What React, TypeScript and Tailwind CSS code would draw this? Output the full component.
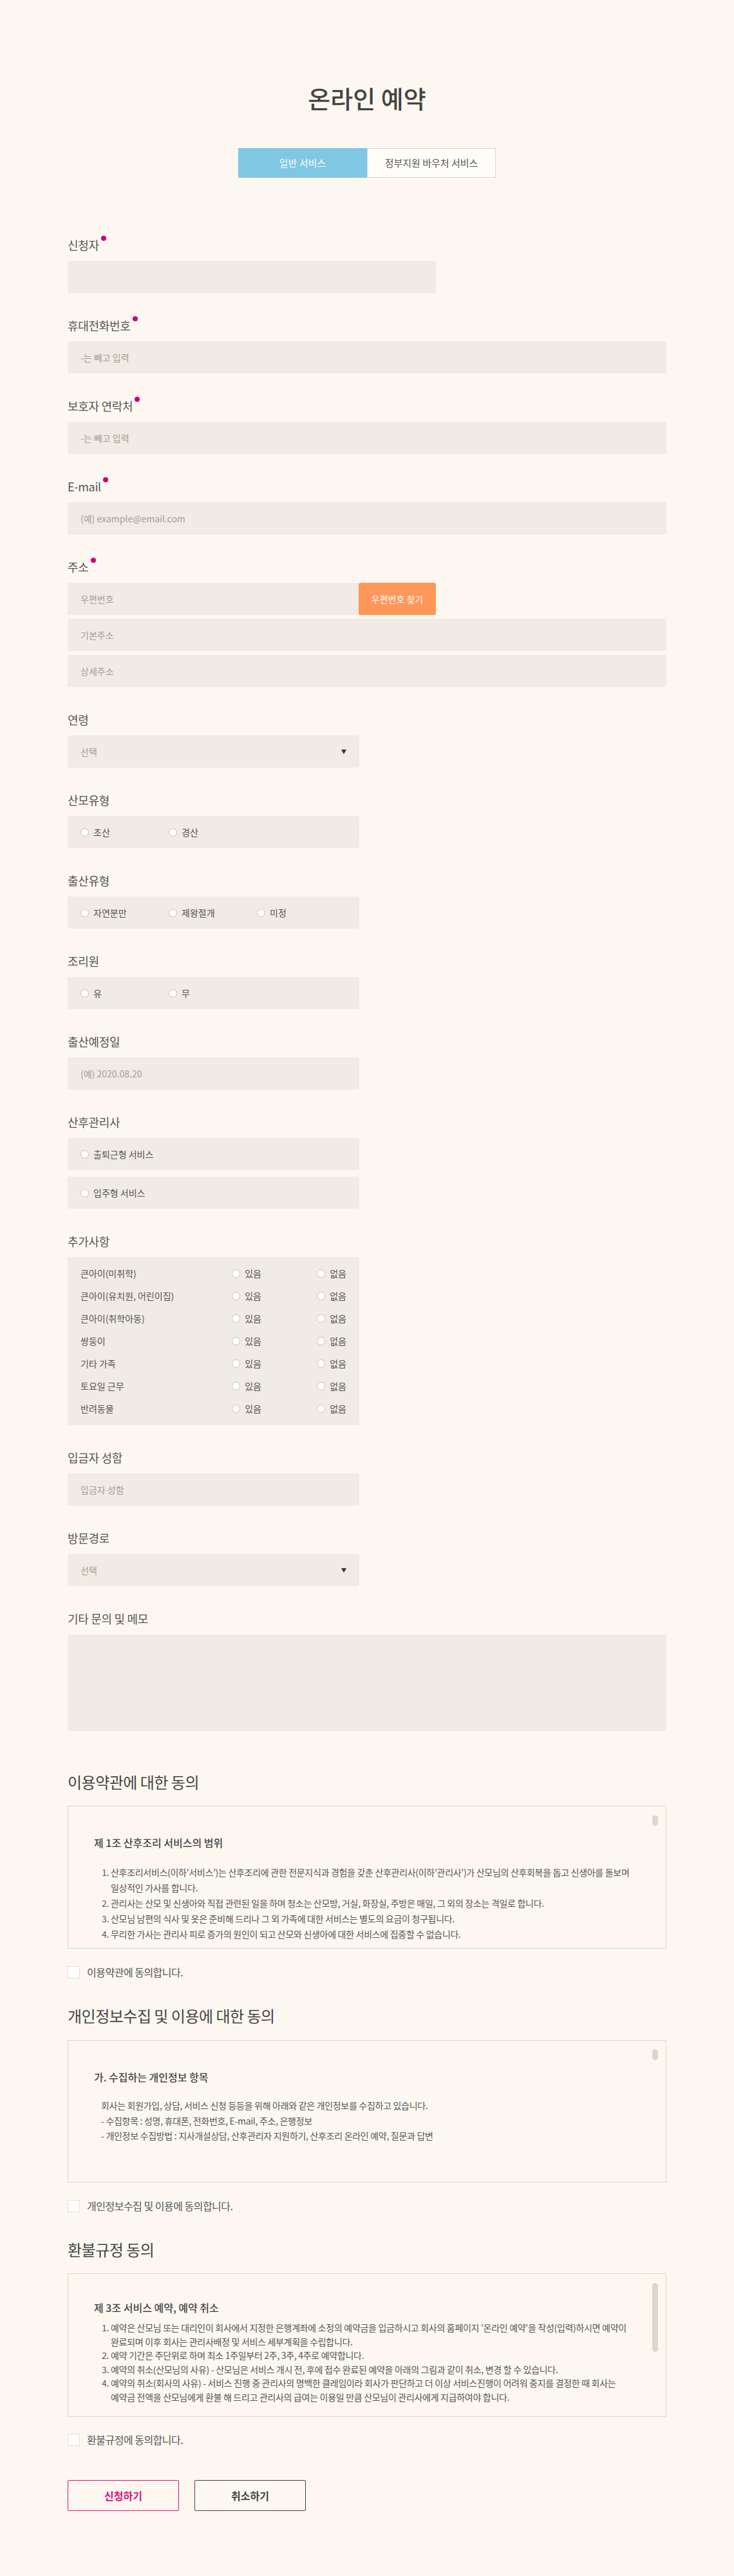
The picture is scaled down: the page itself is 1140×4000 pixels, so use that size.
import React from "react";

const FONT = "font-['Noto_Sans_CJK_KR','Noto_Sans',sans-serif]";

function Label({ children, required }: { children: React.ReactNode; required?: boolean }) {
  return (
    <div className="flex items-start h-[24px] text-[18px] leading-[24px] tracking-[-0.3px] text-[#555]">
      <span>{children}</span>
      {required && <span className="ml-[3px] mt-[-2px] w-[8px] h-[8px] rounded-full bg-[#d4006e]" />}
    </div>
  );
}

function TextInput({ placeholder, className = "" }: { placeholder?: string; className?: string }) {
  return (
    <input
      placeholder={placeholder}
      className={`h-[50px] rounded-[3px] bg-[#f0ebe4] px-[20px] text-[14px] text-[#555] placeholder:text-[#a49e97] outline-none ${className}`}
    />
  );
}

function SelectBox() {
  return (
    <div className="w-[453px] h-[50px] rounded-[3px] bg-[#f0ebe4] px-[20px] flex items-center justify-between text-[14px] text-[#a49e97]">
      <span>선택</span>
      <svg width="8" height="7" viewBox="0 0 8 7">
        <path d="M0 0 H8 L4 7 Z" fill="#333" />
      </svg>
    </div>
  );
}

function Radio({ label }: { label: string }) {
  return (
    <span className="flex items-center gap-[7px]">
      <span className="w-[13px] h-[13px] rounded-full border border-[#c4c0ba] bg-white shrink-0" />
      <span>{label}</span>
    </span>
  );
}

function RadioBox({ options }: { options: string[] }) {
  return (
    <div className="w-[453px] h-[50px] rounded-[3px] bg-[#f0ebe4] px-[20px] flex items-center text-[14px] text-[#555]">
      {options.map((o) => (
        <span key={o} className="w-[137px]">
          <Radio label={o} />
        </span>
      ))}
    </div>
  );
}

function Field({ label, required, children }: { label: string; required?: boolean; children: React.ReactNode }) {
  return (
    <div className="flex flex-col gap-[13px]">
      <Label required={required}>{label}</Label>
      {children}
    </div>
  );
}

function Check({ text }: { text: string }) {
  return (
    <div className="flex items-center gap-[11px] h-[20px]">
      <span className="w-[19px] h-[19px] bg-white border border-[#e4ded4]" />
      <span className="text-[16px] leading-[20px] tracking-[-0.5px] text-[#555]">{text}</span>
    </div>
  );
}

const extras = [
  "큰아이(미취학)",
  "큰아이(유치원, 어린이집)",
  "큰아이(취학아동)",
  "쌍둥이",
  "기타 가족",
  "토요일 근무",
  "반려동물",
];

export default function App() {
  return (
    <div className={`min-h-screen bg-[#fcf8f1] ${FONT}`}>
      <div className="w-[930px] mx-auto pt-[127px] pb-[102px]">
        <h1 className="text-center text-[38px] leading-[50px] font-medium text-[#444]">온라인 예약</h1>

        <div className="mt-[53px] flex justify-center">
          <div className="w-[200px] h-[46px] bg-[#80c7e3] flex items-center justify-center text-white text-[15px]">
            일반 서비스
          </div>
          <div className="w-[200px] h-[46px] bg-[#fffdf9] border border-[#ddd3c3] flex items-center justify-center text-[#555] text-[15px]">
            정부지원 바우처 서비스
          </div>
        </div>

        <div className="mt-[92px] flex flex-col gap-[38px]">
          <Field label="신청자" required>
            <TextInput className="w-[572px]" />
          </Field>
          <Field label="휴대전화번호" required>
            <TextInput className="w-full" placeholder="-는 빼고 입력" />
          </Field>
          <Field label="보호자 연락처" required>
            <TextInput className="w-full" placeholder="-는 빼고 입력" />
          </Field>
          <Field label="E-mail" required>
            <TextInput className="w-full" placeholder="(예) example@email.com" />
          </Field>
          <Field label="주소" required>
            <div className="flex flex-col gap-[6px]">
              <div className="flex">
                <input
                  placeholder="우편번호"
                  className="w-[452px] h-[50px] rounded-l-[3px] bg-[#f0ebe4] px-[20px] text-[14px] placeholder:text-[#a49e97] outline-none"
                />
                <div className="w-[120px] h-[50px] rounded-[3px] bg-[#ff9758] flex items-center justify-center text-white text-[14px]">
                  우편번호 찾기
                </div>
              </div>
              <TextInput className="w-full" placeholder="기본주소" />
              <TextInput className="w-full" placeholder="상세주소" />
            </div>
          </Field>
          <Field label="연령">
            <SelectBox />
          </Field>
          <Field label="산모유형">
            <RadioBox options={["초산", "경산"]} />
          </Field>
          <Field label="출산유형">
            <RadioBox options={["자연분만", "제왕절개", "미정"]} />
          </Field>
          <Field label="조리원">
            <RadioBox options={["유", "무"]} />
          </Field>
          <Field label="출산예정일">
            <TextInput className="w-[453px]" placeholder="(예) 2020.08.20" />
          </Field>
          <Field label="산후관리사">
            <div className="flex flex-col gap-[10px]">
              <RadioBox options={["출퇴근형 서비스"]} />
              <RadioBox options={["입주형 서비스"]} />
            </div>
          </Field>
          <Field label="추가사항">
            <div className="w-[453px] rounded-[3px] bg-[#f0ebe4] px-[20px] py-[8px] text-[14px] text-[#555]">
              {extras.map((e) => (
                <div key={e} className="h-[35px] flex items-center">
                  <span className="flex-1">{e}</span>
                  <span className="w-[132px]">
                    <Radio label="있음" />
                  </span>
                  <Radio label="없음" />
                </div>
              ))}
            </div>
          </Field>
          <Field label="입금자 성함">
            <TextInput className="w-[453px]" placeholder="입금자 성함" />
          </Field>
          <Field label="방문경로">
            <SelectBox />
          </Field>
          <Field label="기타 문의 및 메모">
            <textarea className="w-full h-[150px] rounded-[3px] bg-[#f0ebe4] p-[20px] resize-none outline-none text-[14px]" />
          </Field>
        </div>

        {/* 이용약관 */}
        <section className="mt-[63px]">
          <h2 className="text-[24px] leading-[32px] tracking-[-0.5px] text-[#444]">이용약관에 대한 동의</h2>
          <div className="mt-[21px] relative h-[222px] overflow-hidden border border-[#ddd5c7] pl-[40px] pr-[40px] pt-[44px]">
            <div className="absolute right-[12px] top-[14px] w-[9px] h-[16px] rounded-full bg-[#ddd6cc]" />
            <h3 className="text-[16px] leading-[24px] font-medium text-[#444] mb-[22px]">제 1조 산후조리 서비스의 범위</h3>
            <ol className="list-decimal break-keep pl-[26px] text-[14px] leading-[24px] tracking-[-0.3px] text-[#555]">
              <li>
                산후조리서비스(이하'서비스')는 산후조리에 관한 전문지식과 경험을 갖춘 산후관리사(이하'관리사')가 산모님의 산후회복을 돕고 신생아를 돌보며 일상적인 가사를 합니다.
              </li>
              <li>관리사는 산모 및 신생아와 직접 관련된 일을 하며 청소는 산모방, 거실, 화장실, 주방은 매일, 그 외의 장소는 격일로 합니다.</li>
              <li>산모님 남편의 식사 및 옷은 준비해 드리나 그 외 가족에 대한 서비스는 별도의 요금이 청구됩니다.</li>
              <li>무리한 가사는 관리사 피로 증가의 원인이 되고 산모와 신생아에 대한 서비스에 집중할 수 없습니다.</li>
            </ol>
          </div>
          <div className="mt-[26px]">
            <Check text="이용약관에 동의합니다." />
          </div>
        </section>

        {/* 개인정보 */}
        <section className="mt-[42px]">
          <h2 className="text-[24px] leading-[32px] tracking-[-0.5px] text-[#444]">개인정보수집 및 이용에 대한 동의</h2>
          <div className="mt-[22px] relative h-[221px] overflow-hidden border border-[#ddd5c7] pl-[40px] pr-[40px] pt-[44px]">
            <div className="absolute right-[12px] top-[13px] w-[9px] h-[17px] rounded-full bg-[#ddd6cc]" />
            <h3 className="text-[16px] leading-[24px] font-medium text-[#444] mb-[21px]">가. 수집하는 개인정보 항목</h3>
            <div className="pl-[11px] break-keep text-[14px] leading-[23.5px] tracking-[-0.3px] text-[#555]">
              <p>회사는 회원가입, 상담, 서비스 신청 등등을 위해 아래와 같은 개인정보를 수집하고 있습니다.</p>
              <p>- 수집항목 : 성명, 휴대폰, 전화번호, E-mail, 주소, 은행정보</p>
              <p>- 개인정보 수집방법 : 지사개설상담, 산후관리자 지원하기, 산후조리 온라인 예약, 질문과 답변</p>
            </div>
          </div>
          <div className="mt-[26px]">
            <Check text="개인정보수집 및 이용에 동의합니다." />
          </div>
        </section>

        {/* 환불규정 */}
        <section className="mt-[42px]">
          <h2 className="text-[24px] leading-[32px] tracking-[-0.5px] text-[#444]">환불규정 동의</h2>
          <div className="mt-[21px] relative h-[223px] overflow-hidden border border-[#ddd5c7] pl-[40px] pr-[40px] pt-[40px]">
            <div className="absolute right-[12px] top-[14px] w-[9px] h-[107px] rounded-full bg-[#ddd6cc]" />
            <h3 className="text-[16px] leading-[24px] font-medium text-[#444] mb-[9px]">제 3조 서비스 예약, 예약 취소</h3>
            <ol className="list-decimal break-keep pl-[26px] text-[14px] leading-[21.5px] tracking-[-0.3px] text-[#555]">
              <li>
                예약은 산모님 또는 대리인이 회사에서 지정한 은행계좌에 소정의 예약금을 입금하시고 회사의 홈페이지 '온라인 예약'을 작성(입력)하시면 예약이 완료되며 이후 회사는 관리사배정 및 서비스 세부계획을 수립합니다.
              </li>
              <li>예약 기간은 주단위로 하며 최소 1주일부터 2주, 3주, 4주로 예약합니다.</li>
              <li>예약의 취소(산모님의 사유) - 산모님은 서비스 개시 전, 후에 접수 완료된 예약을 아래의 그림과 같이 취소, 변경 할 수 있습니다.</li>
              <li>
                예약의 취소(회사의 사유) - 서비스 진행 중 관리사의 명백한 클레임이라 회사가 판단하고 더 이상 서비스진행이 어려워 중지를 결정한 때 회사는 예약금 전액을 산모님에게 환불 해 드리고 관리사의 급여는 이용일 만큼 산모님이 관리사에게 지급하여야 합니다.
              </li>
            </ol>
          </div>
          <div className="mt-[25px]">
            <Check text="환불규정에 동의합니다." />
          </div>
        </section>

        <div className="mt-[53px] flex gap-[24px]">
          <button className="w-[173px] h-[48px] rounded-[2px] border border-[#d9137a] bg-transparent text-[#d9137a] text-[16px] font-bold">
            신청하기
          </button>
          <button className="w-[173px] h-[48px] rounded-[2px] border border-[#444] bg-transparent text-[#444] text-[16px] font-bold">
            취소하기
          </button>
        </div>
      </div>
    </div>
  );
}
